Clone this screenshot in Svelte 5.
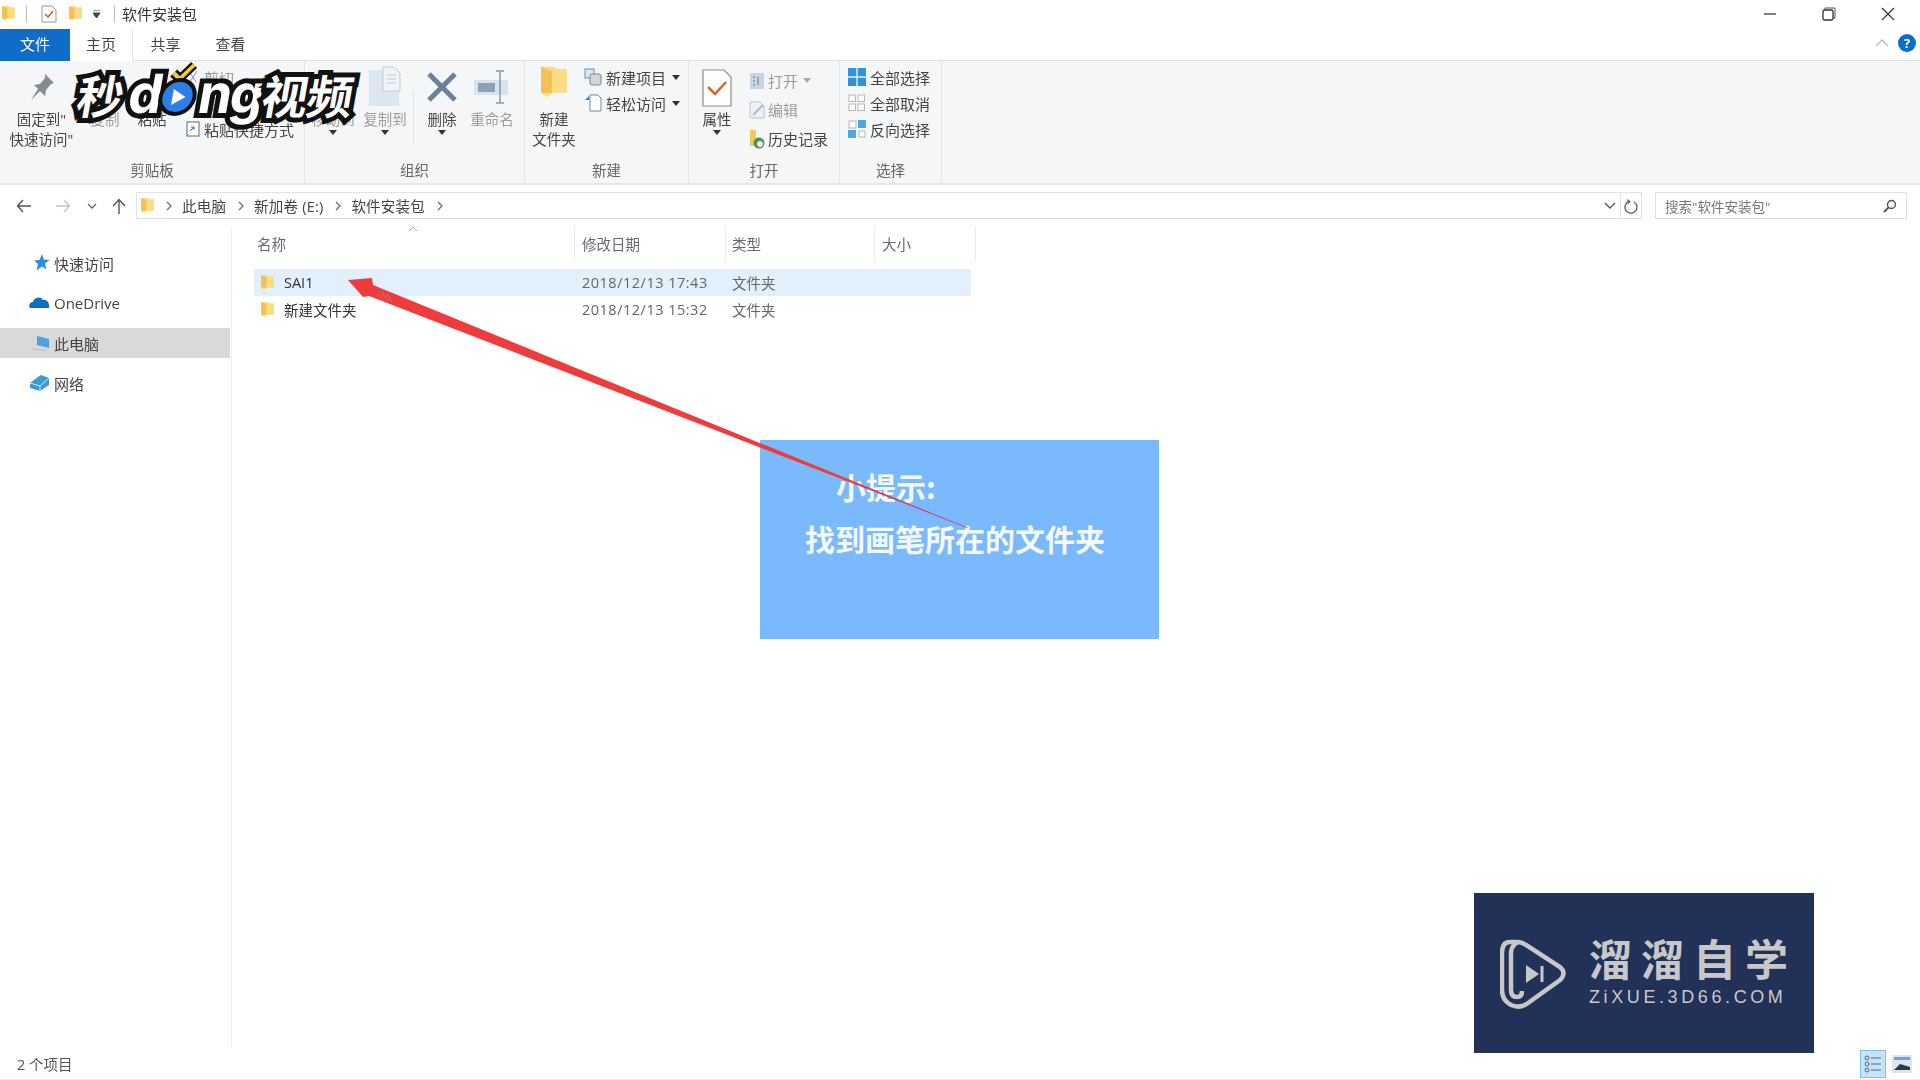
<script>
  const nav = [
    { name: '快速访问', icon: 'star' },
    { name: 'OneDrive', icon: 'cloud' },
    { name: '此电脑', icon: 'pc', active: true },
    { name: '网络', icon: 'net' }
  ];
  const files = [
    { name: 'SAI1', date: '2018/12/13 17:43', type: '文件夹', selected: true },
    { name: '新建文件夹', date: '2018/12/13 15:32', type: '文件夹' }
  ];
  const crumbs = ['此电脑', '新加卷 (E:)', '软件安装包'];
</script>

{#snippet folder(w, h)}
  <svg width={w} height={h} viewBox="0 0 12 16">
    <path d="M0 1h6l1 1h5v11H5l-2 2-3-2z" fill="#f9dc84" />
    <path d="M0 1l5 2v10H0z" fill="#f3c14f" />
  </svg>
{/snippet}

{#snippet navIcon(kind)}
  <svg class="nav-icon" width="22" height="20" viewBox="0 0 22 20">
    {#if kind === 'star'}
      <path d="M13 1l1.800 5.500 5.700.5-4.500 3.500 1.500 6-4.500-3-5.500 4 1.500-6.500-4-3.500 5.500-.5z" fill="#2a8fe0" />
    {:else if kind === 'cloud'}
      <path d="M1 15c-2-3 0-6 3-6 1-5 8-6 10-2 3-1 7 2 6 8z" fill="#0f6ec6" />
    {:else if kind === 'pc'}
      <path d="M8 3l12 3v9L8 12z" fill="#4aa3e0" />
      <path d="M3 16l14 1.500" stroke="#c4c4c4" stroke-width="1.500" />
    {:else}
      <path d="M1 10l8-6 3-2 8 3v7l-9 6-10-3z" fill="#3c9ad8" />
      <path d="M1 10l10 3 9-8M11 13v5" stroke="#d4ecf9" stroke-width="1" fill="none" />
    {/if}
  </svg>
{/snippet}

{#snippet caret()}
  <svg class="caret" width="8" height="5" viewBox="0 0 8 5"><path d="M0 0h8L4 5z" fill="#333" /></svg>
{/snippet}

{#snippet chev()}
  <svg class="chev" width="7" height="10" viewBox="0 0 7 10"><path d="M1 1l4 4-4 4" fill="none" stroke="#666" stroke-width="1.200" /></svg>
{/snippet}

<div class="window">
  <div class="blurred">
    <header class="titlebar">
      <span class="qa first">{@render folder(13, 17)}</span>
      <i class="vsep"></i>
      <svg class="qa doc" width="16" height="18" viewBox="0 0 16 18">
        <path d="M1 1h10l4 4v12H1z" fill="#fff" stroke="#999" />
        <path d="M4 9l3 3 5-6" fill="none" stroke="#d9562a" stroke-width="1.500" />
      </svg>
      <span class="qa second">{@render folder(13, 17)}</span>
      <svg class="qa drop" width="9" height="8" viewBox="0 0 9 8"><path d="M1 0h7M1 3h7L4.500 8z" stroke="#444" fill="#444" /></svg>
      <i class="vsep two"></i>
      <span class="title">软件安装包</span>
      <div class="winctl">
        <svg width="14" height="14" viewBox="0 0 14 14"><path d="M1 7h12" stroke="#555" stroke-width="1.500" /></svg>
        <svg width="14" height="14" viewBox="0 0 14 14"><path d="M3 3V1h10v10h-2" fill="none" stroke="#555" /><rect x="1" y="3" width="10" height="10" rx="1.500" fill="#fff" stroke="#333" stroke-width="1.300" /></svg>
        <svg width="14" height="14" viewBox="0 0 14 14"><path d="M1 1l12 12M13 1L1 13" stroke="#333" stroke-width="1.200" /></svg>
      </div>
    </header>

    <nav class="tabs">
      <span class="tab file">文件</span>
      <span class="tab home">主页</span>
      <span class="tab">共享</span>
      <span class="tab">查看</span>
      <div class="tab-right">
        <svg width="14" height="8" viewBox="0 0 14 8"><path d="M1 7l6-6 6 6" fill="none" stroke="#bbb" stroke-width="1.300" /></svg>
        <span class="help">?</span>
      </div>
    </nav>

    <section class="ribbon">
      <div class="group clip">
        <div class="body">
          <div class="big w84">
            <svg class="ic" width="32" height="32" viewBox="0 0 32 32"><path d="M19 3l9 9-3 1-5 6-1 6-5-5-9 9 7-11-4-4 6-1 5-6z" fill="#838b94" /></svg>
            <span>固定到"<br />快速访问"</span>
          </div>
          <div class="big w42 dis"><span class="ic-space"></span><span>复制</span></div>
          <div class="big w52"><span class="ic-space"></span><span>粘贴</span></div>
          <div class="smalls">
            <div class="small dis"><svg width="14" height="14" viewBox="0 0 14 14"><path d="M3 1l7 11M11 1L4 12" stroke="#7f9bb6" fill="none" /></svg>剪切</div>
            <div class="small dis"><span class="sq"></span>复制路径</div>
            <div class="small"><svg width="14" height="16" viewBox="0 0 14 16"><rect x="1" y="1" width="12" height="14" fill="#fff" stroke="#666" /><path d="M4 10l4-4M5 6h3v3" stroke="#1c6fc4" fill="none" /></svg>粘贴快捷方式</div>
          </div>
        </div>
        <div class="label">剪贴板</div>
      </div>

      <div class="group org">
        <div class="body">
          <div class="big w52 dis"><span class="ic-space"></span><span>移动到</span>{@render caret()}</div>
          <div class="big w52 dis">
            <svg class="ic" width="36" height="42" viewBox="0 0 36 42"><rect x="2" y="4" width="30" height="36" fill="#dbe6f1" /><path d="M16 1h11l6 6v18H16z" fill="#eef3f8" stroke="#c3ccd6" /><path d="M20 9h9M20 13h9M20 17h9" stroke="#c3ccd6" /></svg>
            <span>复制到</span>{@render caret()}
          </div>
          <i class="ribbon-sep"></i>
          <div class="big w48">
            <svg class="ic" width="32" height="32" viewBox="0 0 32 32"><path d="M3 3l26 26M29 3L3 29" stroke="#6c7f9c" stroke-width="5" /></svg>
            <span>删除</span>{@render caret()}
          </div>
          <div class="big w52 dis">
            <svg class="ic" width="38" height="36" viewBox="0 0 38 36"><rect x="1" y="11" width="34" height="15" fill="#d7e3ef" /><rect x="5" y="14" width="17" height="9" fill="#8ea0b5" /><path d="M23 2h8M27 2v32M23 34h8" stroke="#8b97a5" stroke-width="1.500" fill="none" /></svg>
            <span>重命名</span>
          </div>
        </div>
        <div class="label">组织</div>
      </div>

      <div class="group newg">
        <div class="body">
          <div class="big w48">
            <span class="ic">{@render folder(26, 36)}</span>
            <span>新建<br />文件夹</span>
          </div>
          <div class="smalls">
            <div class="small"><svg width="18" height="18" viewBox="0 0 18 18"><rect x="1" y="1" width="9" height="9" fill="#dce9f5" stroke="#6d8dab" /><rect x="6" y="6" width="11" height="11" rx="2" fill="#cfd6dd" stroke="#7a8794" /></svg>新建项目{@render caret()}</div>
            <div class="small"><svg width="18" height="18" viewBox="0 0 18 18"><path d="M6 1h8l3 3v13H6z" fill="#fff" stroke="#7a8794" /><path d="M1 6l4-4v4z" fill="#2f7fc4" /></svg>轻松访问{@render caret()}</div>
          </div>
        </div>
        <div class="label">新建</div>
      </div>

      <div class="group open">
        <div class="body">
          <div class="big w46">
            <svg class="ic prop" width="30" height="38" viewBox="0 0 30 38"><path d="M1 1h21l7 7v29H1z" fill="#fff" stroke="#8c8c8c" stroke-width="1.200" /><path d="M6 18l7 7 11-12" fill="none" stroke="#d9622b" stroke-width="2.500" /></svg>
            <span>属性</span>{@render caret()}
          </div>
          <div class="smalls tall">
            <div class="small dis"><svg width="16" height="18" viewBox="0 0 16 18"><rect x="1" y="1" width="14" height="16" fill="#c7d6e6" /><path d="M4 5h2M4 9h2M4 13h2M9 5v8" stroke="#5b7694" fill="none" /></svg>打开<svg class="caret" width="8" height="5" viewBox="0 0 8 5"><path d="M0 0h8L4 5z" fill="#aaa" /></svg></div>
            <div class="small dis"><svg width="16" height="18" viewBox="0 0 16 18"><path d="M1 1h10l4 4v12H1z" fill="#eef2f7" stroke="#b8c6d6" /><path d="M4 14L14 4" stroke="#a9bbd0" stroke-width="2" /></svg>编辑</div>
            <div class="small"><svg width="16" height="20" viewBox="0 0 16 20"><path d="M1 1h6v16H1z" fill="#f3c95f" /><circle cx="10" cy="14" r="5.500" fill="#3c9a45" /><circle cx="11" cy="15" r="3.500" fill="#eee" stroke="#777" /></svg>历史记录</div>
          </div>
        </div>
        <div class="label">打开</div>
      </div>

      <div class="group sel">
        <div class="body">
          <div class="smalls">
            <div class="small"><svg width="18" height="18" viewBox="0 0 18 18"><rect width="18" height="18" fill="#2f93dc" /><path d="M9 0v18M0 9h18" stroke="#dcefff" stroke-width="1.500" /></svg>全部选择</div>
            <div class="small"><svg width="18" height="18" viewBox="0 0 18 18"><g fill="#fff" stroke="#b5b5b5"><rect x="1" y="1" width="6.500" height="6.500" /><rect x="10" y="1" width="6.500" height="6.500" /><rect x="1" y="10" width="6.500" height="6.500" /><rect x="10" y="10" width="6.500" height="6.500" /></g></svg>全部取消</div>
            <div class="small"><svg width="18" height="18" viewBox="0 0 18 18"><rect x="10" y="0" width="8" height="8" fill="#4aa8e6" /><rect x="0" y="10" width="8" height="8" fill="#4aa8e6" /><rect x="1" y="1" width="7" height="7" fill="#fff" stroke="#b5b5b5" /><rect x="11" y="11" width="6" height="6" fill="#fff" stroke="#b5b5b5" /></svg>反向选择</div>
          </div>
        </div>
        <div class="label">选择</div>
      </div>
    </section>

    <div class="navbar">
      <svg class="back" width="16" height="14" viewBox="0 0 16 14"><path d="M15 7H2M7 1L1.500 7 7 13" fill="none" stroke="#555" stroke-width="1.400" /></svg>
      <svg class="fwd" width="16" height="14" viewBox="0 0 16 14"><path d="M1 7h13M9 1l5.500 6L9 13" fill="none" stroke="#c4c4c4" stroke-width="1.400" /></svg>
      <svg class="recent" width="10" height="6" viewBox="0 0 10 6"><path d="M1 1l4 4 4-4" fill="none" stroke="#666" stroke-width="1.300" /></svg>
      <svg class="up" width="14" height="16" viewBox="0 0 14 16"><path d="M7 16V2M1 8l6-6.500L13 8" fill="none" stroke="#555" stroke-width="1.400" /></svg>
      <div class="address">
        <span class="addr-folder">{@render folder(13, 17)}</span>
        {@render chev()}
        {#each crumbs as c}
          <span class="crumb">{c}</span>
          {@render chev()}
        {/each}
        <span class="grow"></span>
        <svg class="addr-drop" width="12" height="7" viewBox="0 0 12 7"><path d="M1 1l5 5 5-5" fill="none" stroke="#555" stroke-width="1.300" /></svg>
        <span class="refresh">
          <svg width="15" height="16" viewBox="0 0 15 16"><path d="M5 2.500A6 6 0 1 0 10 3" fill="none" stroke="#666" stroke-width="1.400" transform="translate(0 1)" /><path d="M3 1l4 2.500L4 6z" fill="#666" /></svg>
        </span>
      </div>
      <div class="search">
        <span>搜索"软件安装包"</span>
        <svg width="14" height="14" viewBox="0 0 14 14"><circle cx="8.500" cy="5.500" r="4" fill="none" stroke="#555" stroke-width="1.400" /><path d="M5.500 8.500L1 13" stroke="#555" stroke-width="1.800" /></svg>
      </div>
    </div>

    <main class="main">
      <aside class="sidebar">
        {#each nav as item}
          <div class="nav-item" class:active={item.active}>
            {@render navIcon(item.icon)}
            <span>{item.name}</span>
          </div>
        {/each}
      </aside>
      <div class="list">
        <div class="columns">
          <span class="col name">名称
            <svg class="sort" width="10" height="6" viewBox="0 0 10 6"><path d="M1 5l4-4 4 4" fill="none" stroke="#aaa" /></svg>
          </span>
          <span class="col date">修改日期</span>
          <span class="col type">类型</span>
          <span class="col size">大小</span>
        </div>
        {#each files as f}
          <div class="row" class:selected={f.selected}>
            <span class="cell name">{@render folder(13, 17)}<b>{f.name}</b></span>
            <span class="cell date">{f.date}</span>
            <span class="cell type">{f.type}</span>
          </div>
        {/each}
      </div>
    </main>

    <footer class="status">
      <span class="count">2 个项目</span>
      <div class="views">
        <span class="view on">
          <svg width="20" height="20" viewBox="0 0 20 20"><g fill="none" stroke="#5a6a78"><circle cx="4" cy="4" r="2" /><circle cx="4" cy="10" r="2" /><circle cx="4" cy="16" r="2" /><path d="M8 4h10M8 10h10M8 16h10" /></g></svg>
        </span>
        <span class="view">
          <svg width="20" height="18" viewBox="0 0 20 18"><rect width="20" height="18" fill="#dfe5ea" /><rect x="2" y="2" width="16" height="3" fill="#5fa8e0" /><path d="M2 15l6-6 10 3v3z" fill="#2c3a44" /></svg>
        </span>
      </div>
    </footer>
  </div>

  <div class="tip">
    <p class="tip-head">小提示:</p>
    <p class="tip-body">找到画笔所在的文件夹</p>
  </div>

  <svg class="arrow" width="1920" height="1080" viewBox="0 0 1920 1080">
    <path d="M348 280L372 278L373 285L968 528L369 296L363 297Z" fill="#ee3b3b" />
    <path d="M860 485L968 528" stroke="#b43a8a" stroke-width=".6" />
    <path d="M381 288l4 10 2-4 4 6M378 294l7 9 4-5 3 4" fill="none" stroke="#99a" stroke-width="1" opacity=".5" />
  </svg>

  <div class="brand">
    <span class="b1 miao">秒</span><span class="b2">d</span>
    <span class="play">
      <svg width="42" height="60" viewBox="0 0 42 60">
        <path d="M11 16l7 6 12-14" fill="none" stroke="#111" stroke-width="9" />
        <path d="M11 16l7 6 12-14" fill="none" stroke="#f5cf2d" stroke-width="4" />
        <circle cx="19" cy="40" r="19" fill="#111" />
        <circle cx="19" cy="40" r="15" fill="#2d7ee6" />
        <path d="M14 32l13 8-13 8z" fill="#fff" />
      </svg>
    </span>
    <span class="b2">ng</span><span class="b1">视频</span>
  </div>

  <div class="logo">
    <svg width="68" height="72" viewBox="0 0 68 72">
      <path d="M10 4h8q4 0 8 3l34 22q7 6 0 13L28 65q-8 6-17 2Q2 62 2 52V15Q2 4 10 4z" fill="none" stroke="#c8c8c8" stroke-width="4.500" />
      <path d="M18 4Q10 8 11 18v34q0 7 6 7 5 0 5-6" fill="none" stroke="#c8c8c8" stroke-width="4.500" />
      <path d="M26 27l13 9-13 9z" fill="#c8c8c8" />
      <path d="M42 28v16" stroke="#c8c8c8" stroke-width="3" />
    </svg>
    <div class="logo-text">
      <div class="logo-cn">溜溜自学</div>
      <div class="logo-en">ZiXUE.3D66.COM</div>
    </div>
  </div>
</div>

<style>
  :global(body) {
    margin: 0;
    background: #fff;
  }

  .window {
    position: relative;
    width: 1920px;
    height: 1080px;
    overflow: hidden;
    background: #fff;
    font-family: "Open Sans", "Noto Sans CJK SC", sans-serif;
    font-size: 14px;
    color: #3c3c3c;
  }

  .blurred {
    display: flex;
    flex-direction: column;
    height: 1080px;
    filter: blur(0.5px);
  }

  .titlebar {
    flex: none;
    height: 29px;
    box-sizing: border-box;
    padding-bottom: 2px;
    display: flex;
    align-items: center;
  }

  .qa {
    display: block;
    flex: none;
    line-height: 0;
  }

  .first { margin-left: 2px; }
  .doc { margin-left: 14px; }
  .second { margin-left: 12px; }
  .drop { margin-left: 10px; }

  .vsep {
    width: 1px;
    height: 18px;
    margin-left: 11px;
    background: #bbb;
  }

  .vsep.two { margin-left: 13px; }

  .title {
    margin-left: 7px;
    font-size: 15px;
    color: #333;
  }

  .winctl {
    margin-left: auto;
    margin-right: 25px;
    display: flex;
    gap: 45px;
  }

  .tabs {
    flex: none;
    height: 32px;
    display: flex;
    align-items: stretch;
  }

  .tab {
    width: 65px;
    box-sizing: border-box;
    padding-bottom: 3px;
    display: flex;
    align-items: center;
    justify-content: center;
    font-size: 15px;
    color: #444;
    border-bottom: 1px solid #dfe0e1;
  }

  .tab.file {
    width: 70px;
    background: #0f6cc8;
    color: #fff;
    border-bottom: 0;
  }

  .tab.home {
    width: 63px;
    border-bottom: 0;
    border-right: 1px solid #e4e5e6;
  }

  .tab-right {
    flex: 1;
    display: flex;
    align-items: center;
    justify-content: flex-end;
    gap: 9px;
    padding-right: 4px;
    padding-bottom: 3px;
    border-bottom: 1px solid #dfe0e1;
  }

  .help {
    width: 18px;
    height: 18px;
    border-radius: 50%;
    background: #0a6ccc;
    color: #fff;
    font-size: 13px;
    font-weight: 700;
    line-height: 18px;
    text-align: center;
  }

  .ribbon {
    flex: none;
    height: 124px;
    box-sizing: border-box;
    display: flex;
    background: #f5f6f7;
    border-bottom: 2px solid #e6e7e8;
  }

  .group {
    flex: none;
    box-sizing: border-box;
    display: flex;
    flex-direction: column;
    border-right: 1px solid #e3e4e5;
  }

  .clip { width: 305px; }
  .org { width: 220px; }
  .newg { width: 164px; }
  .open { width: 151px; }
  .sel { width: 102px; }

  .body {
    flex: 1;
    display: flex;
    min-height: 0;
  }

  .org .body { padding-left: 2px; }
  .newg .body { padding-left: 5px; }
  .open .body { padding-left: 5px; }
  .sel .body { padding-left: 8px; }

  .label {
    flex: none;
    height: 25px;
    line-height: 25px;
    text-align: center;
    font-size: 14.500px;
    color: #666;
  }

  .big {
    flex: none;
    position: relative;
    display: flex;
    flex-direction: column;
    align-items: center;
    font-size: 14.500px;
    line-height: 20px;
    text-align: center;
    color: #444;
    white-space: nowrap;
  }

  .big > span:not(.ic):not(.ic-space) {
    display: block;
  }

  .ic {
    display: block;
    height: 46px;
    margin-top: 3px;
    line-height: 0;
    flex: none;
  }

  .ic.prop {
    height: 44px;
    margin-top: 5px;
  }

  .ic-space {
    display: block;
    height: 49px;
  }

  .big .caret {
    margin: 0;
  }

  .dis { color: #9d9d9d; }
  .w84 { width: 83px; margin-right: 1px; }
  .w42 { width: 42px; }
  .w52 { width: 52px; }
  .w48 { width: 48px; }
  .w46 { width: 46px; }

  .ribbon-sep {
    flex: none;
    width: 1px;
    height: 56px;
    margin: 28px 4px 0 2px;
    background: #e3e4e5;
  }

  .smalls {
    flex: none;
    margin-left: 6px;
    padding-top: 3px;
  }

  .clip .smalls { margin-left: 8px; }
  .sel .smalls { margin-left: 0; }

  .tall { margin-left: 9px; padding-top: 5px; }

  .small {
    height: 26px;
    display: flex;
    align-items: center;
    gap: 4px;
    font-size: 15px;
    color: #444;
    white-space: nowrap;
  }

  .small.dis { color: #9d9d9d; }
  .tall .small { height: 29px; gap: 3px; }

  .small .caret { margin-left: 2px; }

  .sq {
    width: 14px;
    height: 14px;
  }

  .navbar {
    flex: none;
    height: 41px;
    display: flex;
    align-items: center;
    box-sizing: border-box;
  }

  .back { margin-left: 16px; }
  .fwd { margin-left: 23px; }
  .recent { margin-left: 16px; }
  .up { margin-left: 15px; }

  .address {
    flex: none;
    width: 1506px;
    height: 27px;
    box-sizing: border-box;
    margin-left: 10px;
    display: flex;
    align-items: center;
    border: 1px solid #e2e2e2;
    font-size: 14.500px;
    color: #444;
  }

  .addr-folder {
    display: block;
    margin-left: 4px;
    line-height: 0;
  }

  .chev {
    flex: none;
    margin: 0 9px 0 12px;
  }

  .crumb { letter-spacing: 0.2px; }

  .grow { flex: 1; }

  .addr-drop { margin-right: 4px; }

  .refresh {
    align-self: stretch;
    width: 20px;
    display: flex;
    align-items: center;
    justify-content: center;
    border-left: 1px solid #e2e2e2;
  }

  .search {
    flex: none;
    width: 252px;
    height: 27px;
    box-sizing: border-box;
    margin-left: 13px;
    padding: 0 9px 0 9px;
    display: flex;
    align-items: center;
    justify-content: space-between;
    border: 1px solid #e2e2e2;
    font-size: 13.500px;
    color: #777;
  }

  .main {
    flex: 1;
    min-height: 0;
    display: flex;
  }

  .sidebar {
    flex: none;
    width: 232px;
    box-sizing: border-box;
    padding-top: 22px;
    margin-bottom: 3px;
    border-right: 1px solid #f0f0f0;
  }

  .nav-item {
    width: 230px;
    height: 30px;
    margin-bottom: 10px;
    display: flex;
    align-items: center;
    font-size: 15px;
    color: #444;
  }

  .nav-item.active { background: #d9d9d9; }

  .nav-icon {
    margin-left: 29px;
    margin-right: 3px;
  }

  .list {
    flex: 1;
    padding-left: 22px;
  }

  .columns {
    height: 43px;
    width: 722px;
    box-sizing: border-box;
    display: flex;
    padding-bottom: 8px;
  }

  .col {
    flex: none;
    position: relative;
    display: flex;
    align-items: center;
    padding-left: 3px;
    box-sizing: border-box;
    font-size: 14.500px;
    color: #667;
    border-right: 1px solid #eaeaea;
  }

  .col.name { width: 321px; }
  .col.date { width: 151px; padding-left: 7px; }
  .col.type { width: 149px; padding-left: 6px; }
  .col.size { width: 101px; padding-left: 7px; }

  .sort {
    position: absolute;
    left: 154px;
    top: 0;
  }

  .row {
    width: 717px;
    height: 27px;
    display: flex;
    align-items: center;
    font-size: 14.500px;
    color: #666;
  }

  .row.selected { background: #e2f0fb; }

  .cell {
    flex: none;
    display: flex;
    align-items: center;
  }

  .cell.name { width: 328px; padding-left: 7px; box-sizing: border-box; }
  .cell.name b { margin-left: 10px; font-weight: 400; color: #333; }
  .cell.date { width: 150px; letter-spacing: 0.5px; }

  .status {
    flex: none;
    height: 30px;
    box-sizing: border-box;
    padding-bottom: 2px;
    display: flex;
    align-items: center;
    justify-content: space-between;
    border-bottom: 1px solid #ededed;
  }

  .count {
    margin-left: 17px;
    font-size: 14.500px;
    color: #555;
  }

  .views {
    display: flex;
    align-items: center;
    gap: 3px;
    margin-right: 5px;
  }

  .view {
    width: 26px;
    height: 28px;
    display: flex;
    align-items: center;
    justify-content: center;
  }

  .view.on {
    background: #c5e3f8;
    box-shadow: inset 0 0 0 1px #86bfe6;
  }

  /* overlays burned into the video */
  .arrow {
    position: absolute;
    inset: 0;
    pointer-events: none;
  }

  .tip {
    position: absolute;
    left: 760px;
    top: 440px;
    width: 399px;
    height: 199px;
    background: #7ab9fc;
    color: #f4f9ff;
    font-family: "Noto Sans CJK SC", sans-serif;
    font-size: 30px;
    font-weight: 700;
    letter-spacing: 0;
    line-height: 52px;
  }

  .tip p { margin: 0; }

  .tip-head {
    padding: 20px 0 0 76px;
  }

  .tip-body {
    padding-left: 45px;
  }

  .brand {
    position: absolute;
    left: 78px;
    top: 56px;
    height: 76px;
    display: flex;
    align-items: center;
    transform: skewX(-10deg);
    color: #fff;
    font-weight: 700;
    font-size: 46px;
    line-height: 1;
    -webkit-text-stroke: 10px #111;
    paint-order: stroke fill;
  }

  .b1 {
    letter-spacing: -1px;
    font-family: "Noto Sans CJK SC", sans-serif;
  }

  .miao { margin-right: 6px; }

  .b2 {
    font-family: "Inter", sans-serif;
    font-size: 54px;
    letter-spacing: -2px;
  }

  .play {
    display: block;
    line-height: 0;
    margin: -14px -2px 0 -2px;
  }

  .logo {
    position: absolute;
    left: 1474px;
    top: 893px;
    width: 340px;
    height: 160px;
    box-sizing: border-box;
    padding: 45px 0 0 26px;
    display: flex;
    align-items: flex-start;
    gap: 21px;
    background: #223157;
    color: #c8c8c8;
    font-family: "Noto Sans CJK SC", sans-serif;
  }

  .logo-text {
    margin-top: -4px;
  }

  .logo-cn {
    font-size: 43px;
    font-weight: 700;
    line-height: 46px;
    letter-spacing: 9px;
    white-space: nowrap;
  }

  .logo-en {
    font-family: "Liberation Sans", sans-serif;
    font-size: 18px;
    line-height: 20px;
    margin-top: 7px;
    letter-spacing: 3.600px;
    white-space: nowrap;
  }
</style>
